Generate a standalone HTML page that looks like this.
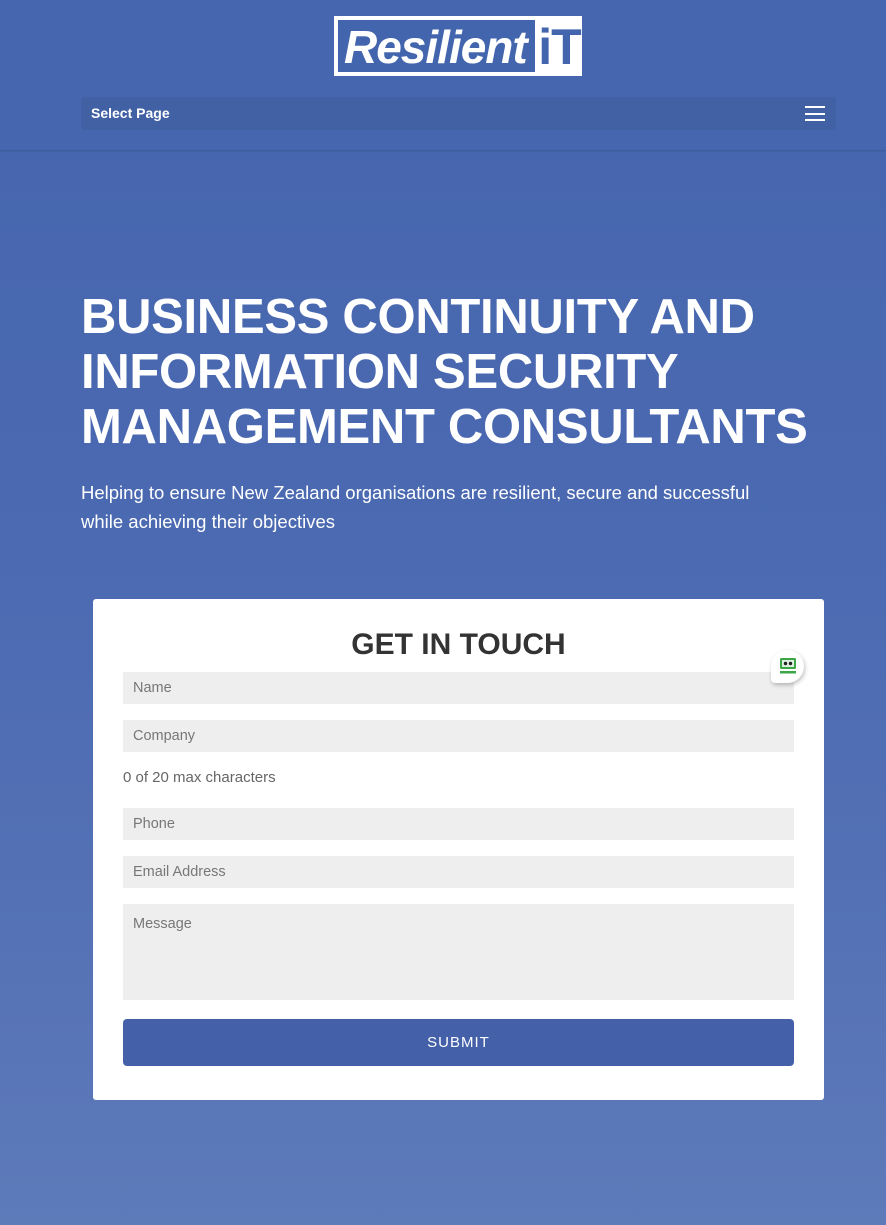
<!DOCTYPE html>
<html><head><meta charset="utf-8"><style>
*{margin:0;padding:0;box-sizing:border-box}
body{width:886px;height:1225px;overflow:hidden;font-family:"Liberation Sans",sans-serif;background:linear-gradient(180deg,#4565ae 0%,#4a69b1 40%,#5370b5 70%,#5d7ab9 100%);position:relative}
.hdr{position:absolute;left:0;top:0;width:886px;height:150px;background:#4667b0;box-shadow:0 1px 2px rgba(0,0,0,.15)}
.logo{position:absolute;left:334px;top:16px;width:248px;height:60px;background:#fff;overflow:hidden}
.logo .in{position:absolute;left:4px;top:4px;width:197px;height:52px;background:#4365ae;color:#fff;font-weight:bold;font-style:italic;font-size:46px;line-height:54px;padding-left:6px;letter-spacing:-1px;white-space:nowrap;overflow:hidden}
.logo .it{position:absolute;left:203px;top:0;width:45px;height:60px;color:#4365ae;font-weight:bold;font-size:50px;line-height:62px;text-align:center;letter-spacing:-1px;white-space:nowrap}
.nav{position:absolute;left:81px;top:97px;width:755px;height:33px;background:#4261a4;border-radius:3px;color:#fff;font-weight:bold;font-size:14px;line-height:33px;padding-left:10px}
.burger{position:absolute;right:11px;top:9px;width:20px;height:15px;border-top:2px solid #fff;border-bottom:2px solid #fff}
.burger:after{content:"";position:absolute;left:0;right:0;top:4.5px;height:2px;background:#fff}
h1{position:absolute;left:81px;top:290px;color:#fff;font-size:49px;line-height:55px;font-weight:bold;letter-spacing:-0.3px;white-space:nowrap}
.sub{position:absolute;left:81px;top:478px;width:715px;color:#fff;font-size:18.5px;line-height:29px;font-weight:300}
.card{position:absolute;left:93px;top:599px;width:731px;height:501px;background:#fff;border-radius:3px}
.f{position:absolute;left:123px;width:671px;height:32px;background:#eee;color:#777;font-size:14.5px;line-height:32px;padding-left:10px}
.cnt{position:absolute;left:123px;top:769px;color:#666;font-size:15px}
.btn{position:absolute;left:123px;top:1019px;width:671px;height:47px;background:#4360a8;border-radius:4px;color:#fff;text-align:center;line-height:47px;font-size:15px;letter-spacing:1px}
.bot{position:absolute;left:771px;top:650px;width:33px;height:33px;border-radius:50% 50% 50% 4px;background:#fff;box-shadow:1px 2px 4px rgba(0,0,0,.25)}
</style></head><body>
<div class="hdr">
<div class="logo"><div class="in">Resilient</div><div class="it">iT</div></div>
<div class="nav">Select Page<div class="burger"></div></div>
</div>
<h1>BUSINESS CONTINUITY AND<br>INFORMATION SECURITY<br>MANAGEMENT CONSULTANTS</h1>
<div class="sub">Helping to ensure New Zealand organisations are resilient, secure and successful while achieving their objectives</div>
<div class="card"></div>
<h2 style="position:absolute;left:93px;width:731px;top:628px;text-align:center;color:#333;font-size:30px">GET IN TOUCH</h2>
<div class="f" style="top:672px">Name</div>
<div class="f" style="top:720px">Company</div>
<div class="cnt">0 of 20 max characters</div>
<div class="f" style="top:808px">Phone</div>
<div class="f" style="top:856px">Email Address</div>
<div class="f" style="top:904px;height:96px;line-height:20px;padding-top:10px">Message</div>
<div class="btn">SUBMIT</div>
<div class="bot"><svg width="33" height="33" viewBox="0 0 33 33"><rect x="9" y="8" width="16" height="11" rx="1.5" fill="#3aa648"/><rect x="11" y="10" width="12" height="7" fill="#dff0df"/><circle cx="14.5" cy="13.5" r="1.7" fill="#222"/><circle cx="19.5" cy="13.5" r="1.7" fill="#222"/><rect x="9" y="21" width="16" height="2.5" fill="#3aa648"/></svg></div>
</body></html>
